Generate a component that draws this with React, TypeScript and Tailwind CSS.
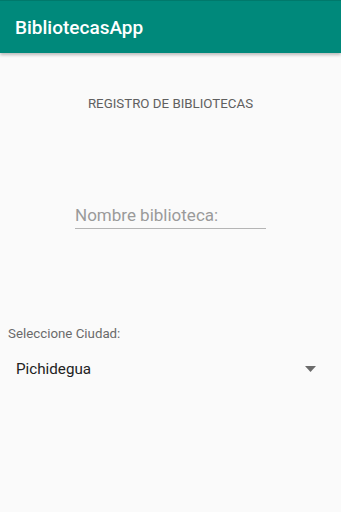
export default function App() {
  return (
    <div className="w-[341px] h-[512px] bg-[#fafafa] overflow-hidden" style={{ fontFamily: 'Roboto, "Noto Sans", sans-serif' }}>
      {/* Toolbar */}
      <div className="h-[53px] bg-[#00897b] border-t border-[#00796b] flex items-center px-[15px] shadow-[0_2px_3px_rgba(0,0,0,0.25)] relative">
        <span className="text-white text-[19px] font-medium leading-none">BibliotecasApp</span>
      </div>

      <div className="flex flex-col">
        <div className="pt-[44px] text-center text-[13.3px] text-[#5f5f5f] leading-none">REGISTRO DE BIBLIOTECAS</div>

        {/* Input */}
        <div className="mt-[94px] ml-[75px] w-[191px] border-b-[1.5px] border-[#b5b5b5] pb-0">
          <span className="text-[17px] text-[#9a9a9a] leading-none">Nombre biblioteca:</span>
        </div>

        <div className="mt-[98px] ml-[8px] text-[13.3px] text-[#6a6a6a] leading-none">Seleccione Ciudad:</div>

        {/* Spinner */}
        <div className="mt-[21px] ml-[16px] mr-[25px] flex items-center justify-between">
          <span className="text-[15.2px] text-[#222] leading-none">Pichidegua</span>
          <svg width="11" height="6" viewBox="0 0 11 6">
            <path d="M0 0 L11 0 L5.5 6 Z" fill="#6b6b6b" />
          </svg>
        </div>
      </div>
    </div>
  );
}
